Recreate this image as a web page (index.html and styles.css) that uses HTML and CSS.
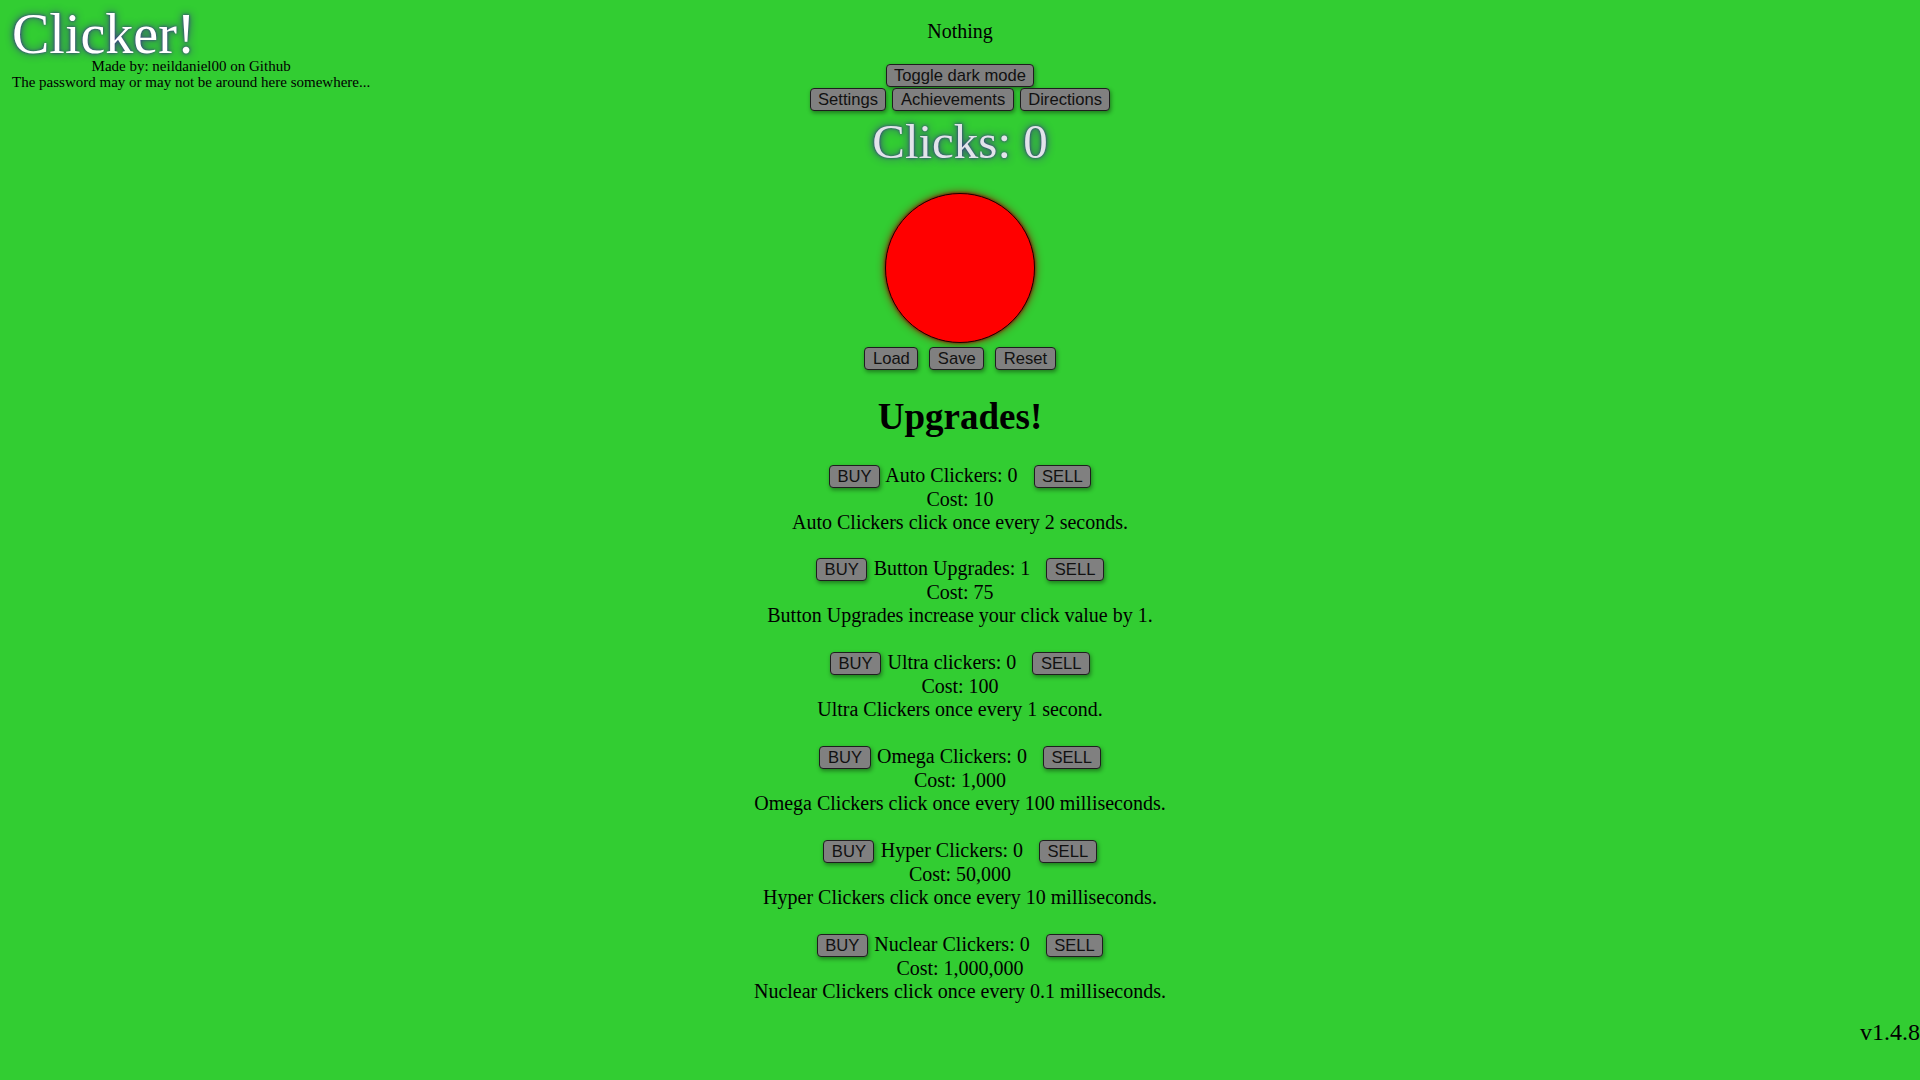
FILE: index.html
```html
<!DOCTYPE html>
<html lang="en">
<head>
<meta charset="utf-8">
<title>Clicker!</title>
<link rel="stylesheet" href="styles.css">
</head>
<body>
<div class="page">
  <header class="brand">
    <div class="brand-title">Clicker!</div>
    <div class="brand-sub">Made by: neildaniel00 on Github</div>
    <div class="brand-sub">The password may or may not be around here somewhere...</div>
  </header>
  <main class="game">
    <div class="status">Nothing</div>
    <div class="btn-row toggle-row"><button class="btn">Toggle dark mode</button></div>
    <div class="btn-row menu-row">
      <button class="btn">Settings</button>
      <button class="btn">Achievements</button>
      <button class="btn">Directions</button>
    </div>
    <div class="clicks">Clicks: 0</div>
    <div class="clicker"></div>
    <div class="btn-row save-row">
      <button class="btn">Load</button>
      <button class="btn">Save</button>
      <button class="btn">Reset</button>
    </div>
    <h1 class="upgrades-title">Upgrades!</h1>
    <div class="upgrades">
      <div class="upgrade">
        <div class="upgrade-line"><button class="btn buy">BUY</button> Auto Clickers: 0 <button class="btn sell">SELL</button></div>
        <div class="upgrade-line">Cost: 10</div>
        <div class="upgrade-line">Auto Clickers click once every 2 seconds.</div>
      </div>
      <div class="upgrade">
        <div class="upgrade-line"><button class="btn buy">BUY</button> Button Upgrades: 1 <button class="btn sell">SELL</button></div>
        <div class="upgrade-line">Cost: 75</div>
        <div class="upgrade-line">Button Upgrades increase your click value by 1.</div>
      </div>
      <div class="upgrade">
        <div class="upgrade-line"><button class="btn buy">BUY</button> Ultra clickers: 0 <button class="btn sell">SELL</button></div>
        <div class="upgrade-line">Cost: 100</div>
        <div class="upgrade-line">Ultra Clickers once every 1 second.</div>
      </div>
      <div class="upgrade">
        <div class="upgrade-line"><button class="btn buy">BUY</button> Omega Clickers: 0 <button class="btn sell">SELL</button></div>
        <div class="upgrade-line">Cost: 1,000</div>
        <div class="upgrade-line">Omega Clickers click once every 100 milliseconds.</div>
      </div>
      <div class="upgrade">
        <div class="upgrade-line"><button class="btn buy">BUY</button> Hyper Clickers: 0 <button class="btn sell">SELL</button></div>
        <div class="upgrade-line">Cost: 50,000</div>
        <div class="upgrade-line">Hyper Clickers click once every 10 milliseconds.</div>
      </div>
      <div class="upgrade">
        <div class="upgrade-line"><button class="btn buy">BUY</button> Nuclear Clickers: 0 <button class="btn sell">SELL</button></div>
        <div class="upgrade-line">Cost: 1,000,000</div>
        <div class="upgrade-line">Nuclear Clickers click once every 0.1 milliseconds.</div>
      </div>
    </div>
    <div class="version">v1.4.8</div>
  </main>
</div>
</body>
</html>
```

FILE: styles.css
```css
html, body {
  margin: 0;
  padding: 0;
  background: #32cd32;
}

body {
  font-family: "Liberation Serif", "Times New Roman", serif;
  font-size: 20px;
  color: #000;
  min-height: 1080px;
}

.page {
  display: grid;
  grid-template-columns: 1fr;
}

.brand {
  grid-area: 1 / 1;
  justify-self: start;
  align-self: start;
  padding-left: 12px;
  padding-top: 10.6px;
  z-index: 1;
}

.brand-title {
  font-size: 56px;
  line-height: 47px;
  color: #fff;
  text-shadow: 0 0 8px #3a2a8c, 0 0 3px #3a2a8c;
  white-space: nowrap;
}

.brand-sub {
  font-size: 15px;
  line-height: 16.6px;
  text-align: center;
  white-space: nowrap;
}

.game {
  grid-area: 1 / 1;
  display: flex;
  flex-direction: column;
  align-items: center;
  text-align: center;
}

.status {
  margin-top: 19.6px;
  line-height: 23px;
}

.btn-row {
  display: flex;
  justify-content: center;
}

.toggle-row {
  margin-top: 21px;
}

.menu-row {
  margin-top: 1.6px;
  gap: 6px;
}

.btn {
  font-family: "Liberation Sans", Arial, sans-serif;
  font-size: 16.6px;
  line-height: 19px;
  padding: 1px 7.5px;
  border: 1px solid #1e1e1e;
  border-radius: 4px;
  background: #808080;
  color: #111;
  box-shadow: 1px 2px 4px rgba(0, 0, 0, 0.4);
  margin: 0;
}

.clicks {
  margin-top: 3px;
  font-size: 49px;
  line-height: 56px;
  color: #e2e4ea;
  text-shadow: 0 0 8px #3a2a8c, 0 0 3px #3a2a8c;
}

.clicker {
  margin-top: 23px;
  width: 148px;
  height: 148px;
  border: 1px solid #1a0000;
  border-radius: 50%;
  background: #ff0000;
  box-shadow: 0 0 8px #8b1a00, 0 0 3px #7a0000;
}

.save-row {
  margin-top: 4px;
  gap: 11px;
}

.upgrades-title {
  margin: 25.8px 0 0;
  font-size: 37px;
  line-height: 42px;
  font-weight: bold;
}

.upgrades {
  margin-top: 25.6px;
  display: flex;
  flex-direction: column;
  gap: 23.8px;
}

.upgrade-line {
  line-height: 23px;
  white-space: nowrap;
}

.buy {
  margin-right: 1.4px;
}

.sell {
  margin-left: 11px;
}

.version {
  align-self: stretch;
  text-align: right;
  margin-top: 16.4px;
  font-size: 24px;
}
```
